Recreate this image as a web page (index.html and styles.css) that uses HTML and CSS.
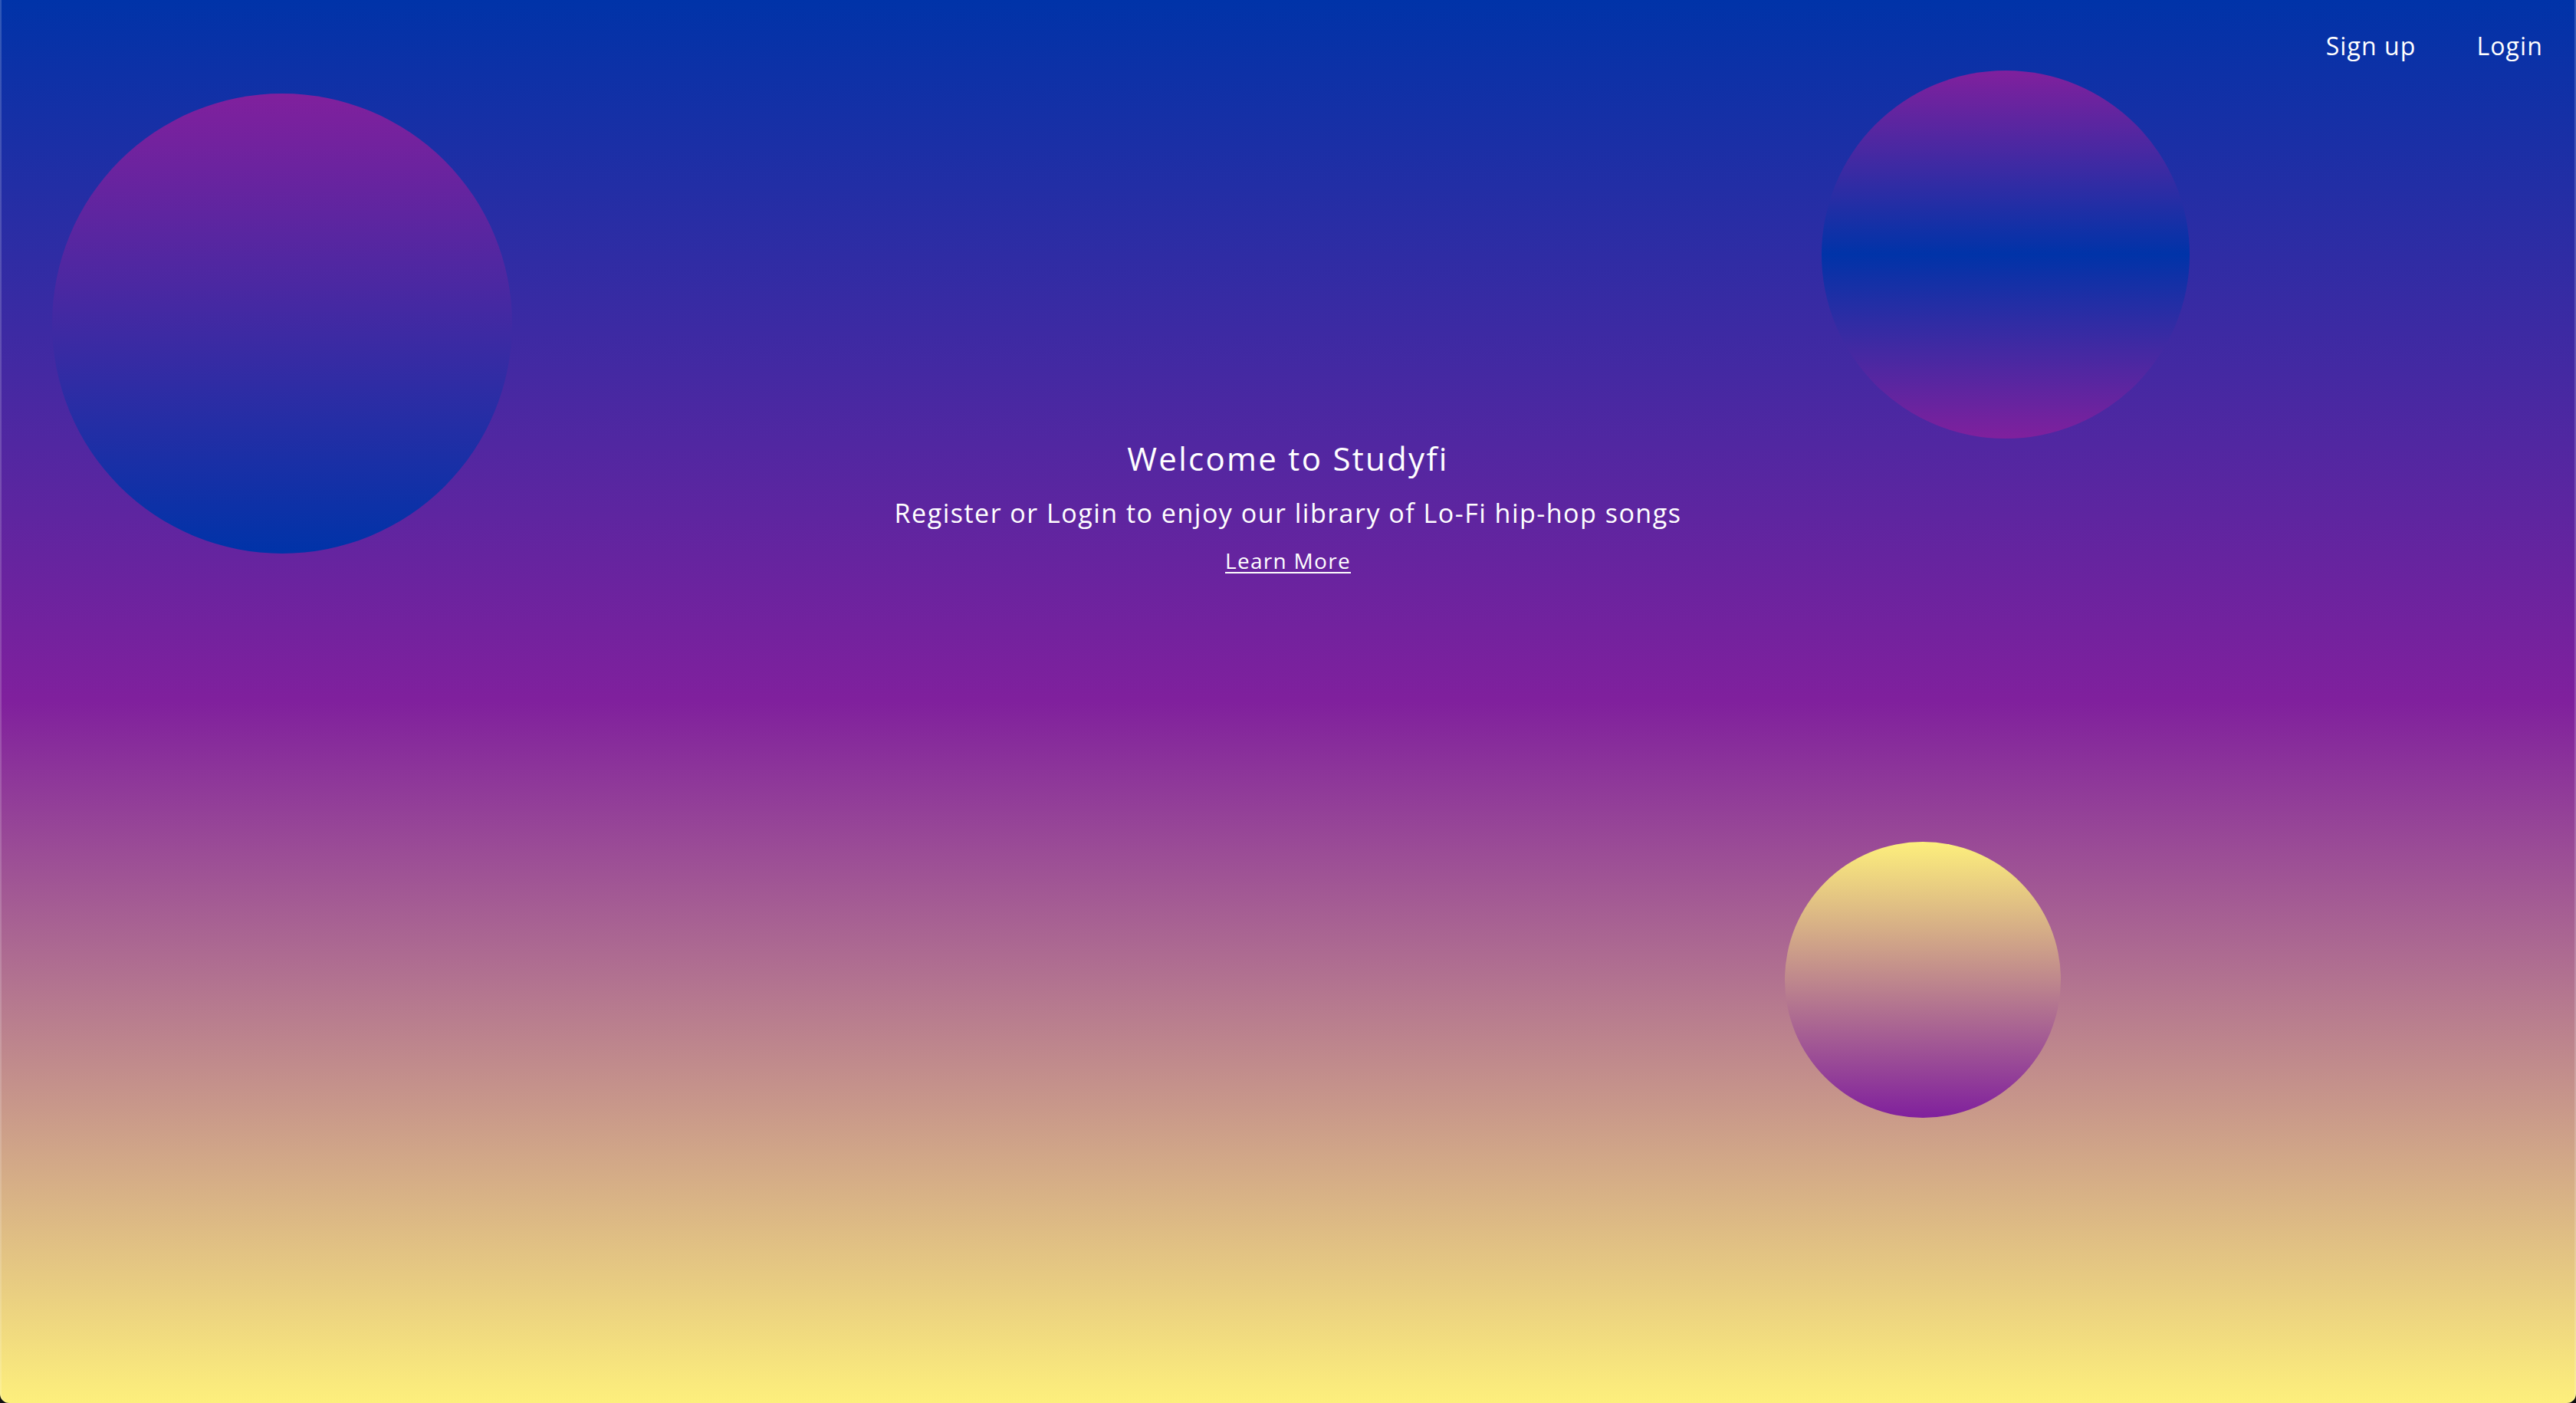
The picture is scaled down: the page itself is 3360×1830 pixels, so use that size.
FILE: index.html
```html
<!DOCTYPE html>
<html lang="en">
<head>
<meta charset="utf-8">
<title>Studyfi</title>
<link rel="stylesheet" href="styles.css">
</head>
<body>
<div class="screen">
  <div class="orb orb-one"></div>
  <div class="orb orb-two"></div>
  <div class="orb orb-three"></div>
  <header class="topbar">
    <nav class="nav">
      <a class="nav-link" href="#">Sign up</a>
      <a class="nav-link" href="#">Login</a>
    </nav>
  </header>
  <main class="hero">
    <h1 class="hero-title">Welcome to Studyfi</h1>
    <p class="hero-sub">Register or Login to enjoy our library of Lo-Fi hip-hop songs</p>
    <a class="hero-link" href="#">Learn More</a>
  </main>
</div>
</body>
</html>
```
FILE: styles.css
```css
html, body {
  margin: 0;
  padding: 0;
  background: #111;
}

.screen {
  position: relative;
  width: 100%;
  height: 1830px;
  overflow: hidden;
  border-radius: 0 0 12px 12px;
  background: linear-gradient(to bottom, #0033a8 0%, #80209d 50%, #fdef7c 100%);
  box-shadow: inset 2px 0 0 rgba(255,255,255,0.18), inset -2px 0 0 rgba(255,255,255,0.18);
  font-family: "Open Sans", "DejaVu Sans", sans-serif;
  color: #fff;
}

.orb {
  position: absolute;
  border-radius: 50%;
}

.orb-one {
  left: 68px;
  top: 122px;
  width: 600px;
  height: 600px;
  background: linear-gradient(to bottom, #80209d, #0033a8);
}

.orb-two {
  left: 2376px;
  top: 92px;
  width: 480px;
  height: 480px;
  background: linear-gradient(to bottom, #80209d 0%, #0033a8 50%, #80209d 100%);
}

.orb-three {
  left: 2328px;
  top: 1098px;
  width: 360px;
  height: 360px;
  background: linear-gradient(to bottom, #fdef7c, #80209d);
}

.topbar {
  position: relative;
  display: flex;
  justify-content: flex-end;
  padding: 40px 43px 0 0;
}

.nav {
  display: flex;
  gap: 79px;
}

.nav-link {
  color: #fff;
  text-decoration: none;
  font-size: 32px;
  line-height: 40px;
  letter-spacing: 1.1px;
}

.hero {
  position: relative;
  display: flex;
  flex-direction: column;
  align-items: center;
  padding-top: 494px;
}

.hero-title {
  margin: 0;
  font-size: 42px;
  line-height: 48px;
  font-weight: 400;
  letter-spacing: 2.3px;
}

.hero-sub {
  margin: 27px 0 0;
  font-size: 34px;
  line-height: 40px;
  letter-spacing: 1.5px;
}

.hero-link {
  margin-top: 24px;
  color: #fff;
  font-size: 28px;
  line-height: 36px;
  letter-spacing: 1.3px;
  text-decoration: underline;
  text-underline-offset: 4px;
  text-decoration-thickness: 2px;
}
```
